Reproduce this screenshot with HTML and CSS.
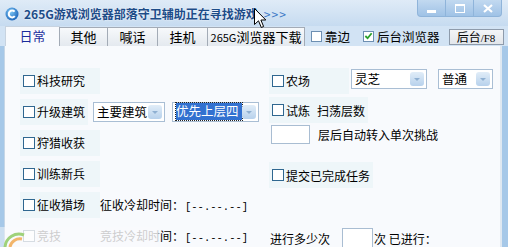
FILE: index.html
```html
<!DOCTYPE html>
<html lang="zh-CN">
<head>
    <meta charset="UTF-8">
    <title>265G游戏浏览器部落守卫辅助</title>
    <link rel="stylesheet" href="styles.css">
</head>
<body>
    <div class="window">
        <div class="titlebar">
            <svg class="app-icon" width="14" height="14" viewBox="0 0 14 14">
                <defs>
                    <radialGradient id="ig" cx="0.4" cy="0.35" r="0.7">
                        <stop offset="0" stop-color="#7cc6f5"/>
                        <stop offset="1" stop-color="#1a62b8"/>
                    </radialGradient>
                </defs>
                <circle cx="7" cy="7" r="6.5" fill="url(#ig)"/>
                <path d="M9.6 4.6 A3.4 3.4 0 1 0 9.8 9.2" fill="none" stroke="#fff" stroke-width="2"/>
            </svg>
            <span class="title">265G游戏浏览器部落守卫辅助正在寻找游戏</span>
            <span class="title-more">&gt;&gt;&gt;</span>
            <div class="winbtns">
                <div class="wb"><span class="wb-min"></span></div>
                <div class="wb"><span class="wb-max"></span></div>
                <div class="wb">
                    <svg width="10" height="9" viewBox="0 0 10 9">
                        <path d="M1 1 L9 8 M9 1 L1 8" stroke="#fff" stroke-width="2.2"/>
                    </svg>
                </div>
            </div>
        </div>

        <div class="tabbar">
            <div class="tab active w54">日常</div>
            <div class="tab w48">其他</div>
            <div class="tab w50">喊话</div>
            <div class="tab w50">挂机</div>
            <div class="tab w97"><span class="tab-num">265G</span>浏览器下载</div>
            <label class="tb-chk first"><span class="box"></span>靠边</label>
            <label class="tb-chk"><span class="box">
                <svg width="10" height="10" viewBox="0 0 10 10">
                    <path d="M1.5 5 L4 7.5 L8.5 2" fill="none" stroke="#2aa02a" stroke-width="2"/>
                </svg>
            </span>后台浏览器</label>
            <button class="tb-btn">后台<span class="f8">/F8</span></button>
        </div>

        <div class="panel">
            <div class="col col-left">
                <div class="row">
                    <label class="chk"><span class="box"></span>科技研究</label>
                </div>
                <div class="row">
                    <label class="chk tight"><span class="box"></span>升级建筑</label>
                    <div class="select s-main"><span class="sel-text">主要建筑</span><span class="drop"></span></div>
                    <div class="select s-prio"><span class="sel-text focused">优先上层四</span><span class="drop"></span></div>
                </div>
                <div class="row">
                    <label class="chk"><span class="box"></span>狩猎收获</label>
                </div>
                <div class="row">
                    <label class="chk"><span class="box"></span>训练新兵</label>
                </div>
                <div class="row">
                    <label class="chk"><span class="box"></span>征收猎场</label>
                    <span class="cd">征收冷却时间：<span class="time">[--.--.--]</span></span>
                </div>
                <div class="row">
                    <label class="chk disabled"><span class="box"></span>竞技</label>
                    <span class="cd"><span class="faded">竞技冷却时</span>间：<span class="time">[--.--.--]</span></span>
                </div>
            </div>

            <div class="col col-right">
                <div class="row r1">
                    <label class="chk"><span class="box"></span>农场</label>
                    <div class="select s-farm"><span class="sel-text">灵芝</span><span class="drop"></span></div>
                    <div class="select s-mode"><span class="sel-text">普通</span><span class="drop"></span></div>
                </div>
                <div class="row r2">
                    <label class="chk"><span class="box"></span>试炼<span class="gap"></span>扫荡层数</label>
                </div>
                <div class="row r3">
                    <span class="field f-floor"></span>
                    <span class="field-label">层后自动转入单次挑战</span>
                </div>
                <div class="row r4">
                    <label class="chk"><span class="box"></span>提交已完成任务</label>
                </div>
                <div class="row r5">
                    <span class="plain">进行多少次</span>
                    <span class="field f-times"></span>
                    <span class="plain">次 已进行：</span>
                </div>
            </div>
        </div>

        <div class="popup-fade">
            <svg width="30" height="16" viewBox="0 0 30 16">
                <path d="M3 16 A14 14 0 0 1 22 4" fill="none" stroke="#9fd27a" stroke-width="3"/>
                <path d="M8 16 A10 10 0 0 1 20 8" fill="none" stroke="#f2b56b" stroke-width="3"/>
            </svg>
        </div>

        <svg class="cursor" width="13" height="21" viewBox="0 0 13 21">
            <path d="M0.5 0.5 L0.5 16.5 L4.5 12.8 L7.3 19.5 L9.6 18.5 L6.9 12 L11.8 12 Z" fill="#fff" stroke="#000" stroke-width="1"/>
        </svg>
    </div>
</body>
</html>
```

FILE: styles.css
```css
body {
    margin: 0;
    font-family: "Noto Sans CJK SC", "Noto Sans", sans-serif;
    font-size: 12px;
    color: #000;
}
.window {
    position: relative;
    width: 508px;
    height: 247px;
    overflow: hidden;
    display: flex;
    flex-direction: column;
    background: #c9ddf1;
}

/* title bar */
.titlebar {
    height: 26px;
    flex: none;
    display: flex;
    align-items: flex-start;
    background: linear-gradient(#dfebf7, #c6dbf0);
}
.app-icon {
    margin: 7px 5px 0 5px;
}
.title {
    margin-top: 5px;
    line-height: 18px;
    font-weight: bold;
    font-size: 12px;
    color: #1d4c88;
    text-shadow: 0 0 2px #fff;
}
.title-more {
    margin: 5px 0 0 6px;
    line-height: 18px;
    color: #3b78c6;
    letter-spacing: 1px;
}
.winbtns {
    display: flex;
    margin-left: auto;
    margin-right: 6px;
}
.wb {
    width: 29px;
    height: 17px;
    box-sizing: border-box;
    border: 1px solid #8fb4da;
    border-top: none;
    margin-left: -1px;
    background: linear-gradient(#c2d9f0, #9fc2e6);
    display: flex;
    align-items: center;
    justify-content: center;
}
.wb:first-child {
    border-bottom-left-radius: 4px;
}
.wb:last-child {
    border-bottom-right-radius: 4px;
}
.wb-min {
    width: 9px;
    height: 3px;
    margin-top: 6px;
    background: #fff;
}
.wb-max {
    width: 8px;
    height: 6px;
    border: 1px solid #fff;
    border-top-width: 2px;
}

/* tabs row */
.tabbar {
    height: 20px;
    flex: none;
    display: flex;
    align-items: flex-end;
    padding-left: 5px;
    background: #d2e3f4;
}
.tab {
    height: 19px;
    box-sizing: border-box;
    border: 1px solid #a3abb6;
    border-bottom: none;
    margin-right: -1px;
    background: linear-gradient(#f7f9fb, #e4e9ef);
    font-size: 13px;
    line-height: 18px;
    text-align: center;
}
.tab.active {
    height: 20px;
    background: #f8fafd;
    border-color: #c7d3e0;
    color: #1b2c9c;
}
.tab-num {
    font-size: 11px;
}
.w54 { width: 55px; }
.w48 { width: 49px; }
.w50 { width: 51px; }
.w97 { width: 98px; }
.tb-chk {
    display: flex;
    align-items: center;
    height: 20px;
    margin-left: 13px;
    font-size: 12.5px;
}
.tb-chk.first {
    margin-left: 7px;
}
.tb-chk .box {
    width: 11px;
    height: 11px;
    margin-right: 3px;
    border-color: #6d8fb2;
}
.tb-btn {
    align-self: center;
    margin: 2px 0 0 9px;
    width: 55px;
    height: 16px;
    padding: 0;
    border: 1px solid #8e9bab;
    background: linear-gradient(#f3f5f7, #e2e6eb);
    font-family: inherit;
    font-size: 12px;
    line-height: 14px;
}
.f8 {
    font-family: "Liberation Serif", serif;
    font-size: 11px;
}

/* content */
.panel {
    flex: 1;
    display: flex;
    background: #f8fafd;
    border-left: 4px solid #a6c8e8;
    border-right: 6px solid #a6c8e8;
    box-shadow: inset 1px 0 #c6d6e6, inset -2px 0 #dfe8f1;
}
.col {
    display: flex;
    flex-direction: column;
    padding-top: 19px;
}
.col-left {
    width: 246px;
    padding-left: 16px;
}
.col-right {
    padding-left: 3px;
}
.row {
    height: 31px;
    display: flex;
    align-items: center;
    white-space: nowrap;
}
.chk {
    display: flex;
    align-items: center;
    box-sizing: border-box;
    min-width: 80px;
    height: 26px;
    padding: 0 3px;
    background: #eef6f9;
}
.chk.tight {
    min-width: 0;
}
.box {
    box-sizing: border-box;
    width: 12px;
    height: 12px;
    margin-right: 2px;
    border: 1px solid #2f6790;
    background: #fff;
    display: flex;
    align-items: center;
    justify-content: center;
}
.chk.disabled {
    color: #a8a8a8;
    background: transparent;
}
.chk.disabled .box {
    border-color: #b9c3cc;
}
.gap {
    width: 7px;
}
.cd {
    font-size: 12px;
}
.time {
    font-family: "Liberation Mono", monospace;
    font-size: 10.5px;
    margin-left: 1px;
}
.faded {
    color: #a8a8a8;
}

/* combo boxes */
.select {
    box-sizing: border-box;
    height: 20px;
    border: 1px solid #a9bed4;
    background: #fff;
    display: flex;
    align-items: center;
    padding: 0 2px 0 3px;
    font-size: 12.5px;
}
.sel-text {
    flex: 1;
    overflow: hidden;
    line-height: 18px;
}
.sel-text.focused {
    flex: none;
    width: 66px;
    line-height: 16px;
    padding-bottom: 1px;
    background: #3271d0;
    color: #fff;
    outline: 1px dotted #222;
}
.drop {
    margin-left: auto;
    width: 14px;
    height: 14px;
    border-radius: 3px;
    background: linear-gradient(#e1edf8, #b7d1ec);
    position: relative;
}
.drop::after {
    content: "";
    position: absolute;
    left: 4px;
    top: 6px;
    border: 3px solid transparent;
    border-top: 3px solid #8fb0d2;
}
.s-main {
    width: 72px;
    margin-left: 5px;
}
.s-prio {
    width: 87px;
    margin-left: 7px;
}
.s-farm {
    width: 76px;
    margin-left: 2px;
    margin-top: -4px;
}
.s-mode {
    width: 55px;
    margin-left: 11px;
    margin-top: -4px;
}

/* right column rows */
.r2 {
    height: 28px;
}
.r3 {
    height: 20px;
}
.r4 {
    height: 22px;
    margin-top: 20px;
}
.r5 {
    height: 22px;
    margin-top: 41px;
}
.field {
    box-sizing: border-box;
    border: 1px solid #a9bdd2;
    background: #fff;
}
.f-floor {
    width: 39px;
    height: 19px;
    margin-left: 2px;
}
.field-label {
    margin-left: 8px;
}
.plain {
    margin-left: 1px;
}
.f-times {
    width: 31px;
    height: 22px;
    margin: 2px 0 0 12px;
}

/* overlay at the bottom left (faded popup) */
.popup-fade {
    position: absolute;
    left: 0;
    top: 227px;
    width: 158px;
    height: 20px;
    background: rgba(250, 251, 253, 0.45);
}
.popup-fade svg {
    position: absolute;
    left: 2px;
    bottom: 0;
}
.cursor {
    position: absolute;
    left: 254px;
    top: 8px;
}
```
